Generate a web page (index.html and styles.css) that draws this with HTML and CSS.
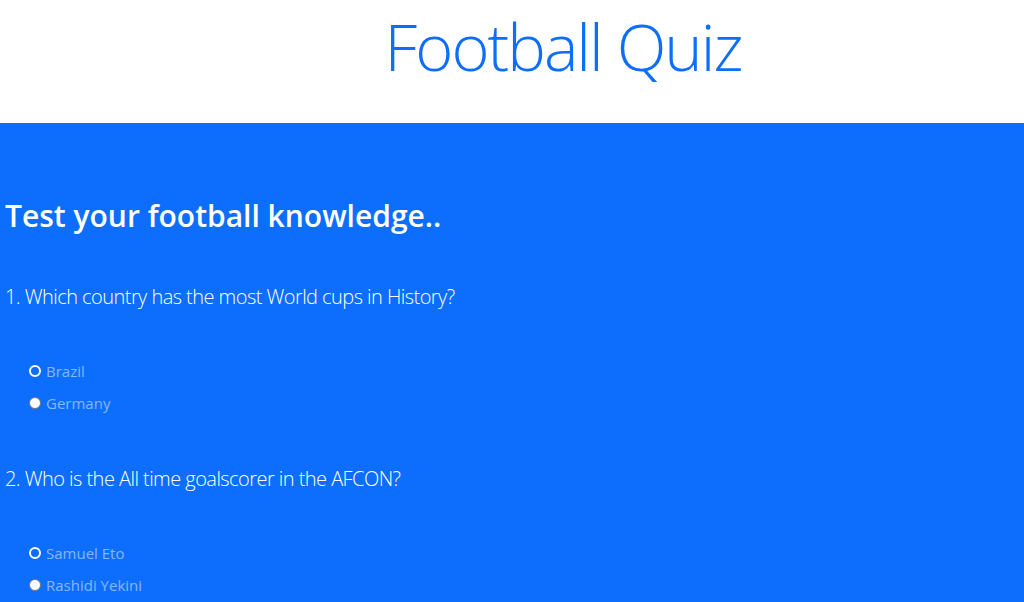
FILE: index.html
```html
<!DOCTYPE html>
<html lang="en">
<head>
<meta charset="utf-8">
<title>Football Quiz</title>
<link rel="stylesheet" href="styles.css">
</head>
<body>
<header class="top">
  <h1 class="title">Football Quiz</h1>
</header>
<main class="quiz">
  <h2 class="lead">Test your football knowledge..</h2>
  <section class="question">
    <p class="q-text">1. Which country has the most World cups in History?</p>
    <ul class="opts">
      <li class="opt"><label class="opt-label"><input type="radio" name="q1" class="radio radio-ring"><span>Brazil</span></label></li>
      <li class="opt"><label class="opt-label"><input type="radio" name="q1" class="radio"><span>Germany</span></label></li>
    </ul>
  </section>
  <section class="question">
    <p class="q-text">2. Who is the All time goalscorer in the AFCON?</p>
    <ul class="opts">
      <li class="opt"><label class="opt-label"><input type="radio" name="q2" class="radio radio-ring"><span>Samuel Eto</span></label></li>
      <li class="opt"><label class="opt-label"><input type="radio" name="q2" class="radio"><span>Rashidi Yekini</span></label></li>
    </ul>
  </section>
</main>
</body>
</html>
```
FILE: styles.css
```css
html, body {
  margin: 0;
  padding: 0;
}
body {
  font-family: "Open Sans", "Noto Sans", sans-serif;
  background: #0d6efd;
  min-height: 602px;
}
.top {
  background: #fff;
  height: 123px;
  box-sizing: border-box;
  padding: 7px 0 0 102px;
  display: flex;
  justify-content: center;
}
.title {
  margin: 0;
  font-size: 65px;
  line-height: 78px;
  font-weight: 300;
  letter-spacing: -2px;
  color: #0d6efd;
  white-space: nowrap;
}
.quiz {
  background: #0d6efd;
  padding: 75px 0 20px 5px;
  color: #fff;
}
.lead {
  margin: 0;
  font-size: 30px;
  line-height: 36px;
  font-weight: 600;
}
.question {
  margin: 51px 0 0;
}
.question + .question {
  margin-top: 48px;
}
.q-text {
  margin: 0;
  font-size: 20px;
  line-height: 24px;
  font-weight: 300;
  letter-spacing: -0.55px;
}
.opts {
  list-style: none;
  margin: 46px 0 0;
  padding: 0 0 0 24px;
}
.opt {
  height: 32px;
}
.opt-label {
  display: flex;
  align-items: center;
  height: 32px;
  font-size: 15px;
  color: rgba(255, 255, 255, 0.5);
}
.radio {
  appearance: none;
  -webkit-appearance: none;
  margin: 0 5px 0 0;
  width: 12px;
  height: 12px;
  border-radius: 50%;
  box-sizing: border-box;
  background: #fff;
  border: 1px solid #767676;
}
.radio-ring {
  background: transparent;
  border: 2px solid #fff;
}
```
